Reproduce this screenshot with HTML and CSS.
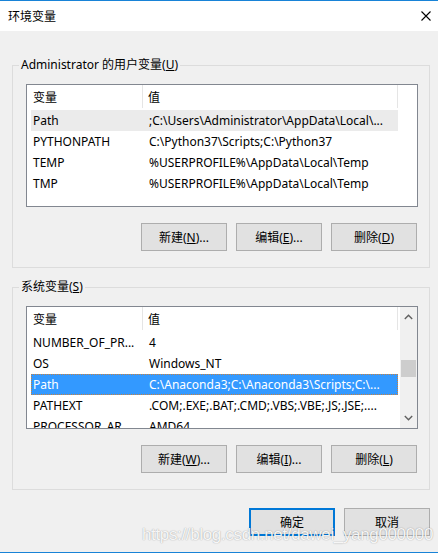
FILE: index.html
```html
<!DOCTYPE html>
<html lang="zh">
<head>
<meta charset="utf-8">
<title>环境变量</title>
<link rel="stylesheet" href="styles.css">
</head>
<body>
<div class="window">
  <div class="titlebar">
    <span class="title">环境变量</span>
    <svg class="close" width="10" height="10" viewBox="0 0 10 10"><path d="M0.5 0.5 L9.5 9.5 M9.5 0.5 L0.5 9.5" stroke="#000" stroke-width="1.1" fill="none"/></svg>
  </div>
  <div class="content">
    <fieldset class="group group-user">
      <legend>Administrator 的用户变量(<u>U</u>)</legend>
      <div class="list">
        <div class="list-main">
          <div class="header">
            <div class="hcell c1">变量</div>
            <div class="hcell c2">值</div>
          </div>
          <div class="row hover"><span class="cell c1">Path</span><span class="cell c2">;C:\Users\Administrator\AppData\Local\...</span></div>
          <div class="row"><span class="cell c1">PYTHONPATH</span><span class="cell c2">C:\Python37\Scripts;C:\Python37</span></div>
          <div class="row"><span class="cell c1">TEMP</span><span class="cell c2">%USERPROFILE%\AppData\Local\Temp</span></div>
          <div class="row"><span class="cell c1">TMP</span><span class="cell c2">%USERPROFILE%\AppData\Local\Temp</span></div>
        </div>
      </div>
      <div class="buttons">
        <button class="btn">新建(<u>N</u>)...</button>
        <button class="btn">编辑(<u>E</u>)...</button>
        <button class="btn">删除(<u>D</u>)</button>
      </div>
    </fieldset>
    <fieldset class="group group-sys">
      <legend>系统变量(<u>S</u>)</legend>
      <div class="list">
        <div class="list-main">
          <div class="header">
            <div class="hcell c1">变量</div>
            <div class="hcell c2">值</div>
          </div>
          <div class="row"><span class="cell c1">NUMBER_OF_PR...</span><span class="cell c2">4</span></div>
          <div class="row"><span class="cell c1">OS</span><span class="cell c2">Windows_NT</span></div>
          <div class="row selected"><span class="cell c1">Path</span><span class="cell c2">C:\Anaconda3;C:\Anaconda3\Scripts;C:\...</span></div>
          <div class="row"><span class="cell c1">PATHEXT</span><span class="cell c2">.COM;.EXE;.BAT;.CMD;.VBS;.VBE;.JS;.JSE;....</span></div>
          <div class="row"><span class="cell c1">PROCESSOR_AR...</span><span class="cell c2">AMD64</span></div>
        </div>
        <div class="scrollbar">
          <svg class="arrow" width="9" height="6" viewBox="0 0 9 6"><path d="M0.8 5 L4.5 1.3 L8.2 5" stroke="#606060" stroke-width="1.4" fill="none"/></svg>
          <div class="track"><div class="thumb"></div></div>
          <svg class="arrow" width="9" height="6" viewBox="0 0 9 6"><path d="M0.8 1 L4.5 4.7 L8.2 1" stroke="#606060" stroke-width="1.4" fill="none"/></svg>
        </div>
      </div>
      <div class="buttons">
        <button class="btn">新建(<u>W</u>)...</button>
        <button class="btn">编辑(<u>I</u>)...</button>
        <button class="btn">删除(<u>L</u>)</button>
      </div>
    </fieldset>
    <div class="dialog-buttons">
      <button class="btn default">确定</button>
      <button class="btn">取消</button>
    </div>
    <div class="watermark">https://blog.csdn.net/dawei_yang000000</div>
  </div>
</div>
</body>
</html>
```

FILE: styles.css
```css
* { box-sizing: border-box; }
html, body {
  margin: 0;
  padding: 0;
  background: #f0f0f0;
}
body {
  font-family: "Noto Sans", "Noto Sans CJK SC", sans-serif;
  font-size: 12px;
  color: #000;
}
.window {
  width: 438px;
  height: 553px;
  display: flex;
  flex-direction: column;
  border-top: 1px solid #1883d7;
  border-bottom: 1px solid #1883d7;
  background: #f0f0f0;
  position: relative;
  overflow: hidden;
}
.titlebar {
  height: 30px;
  background: #fff;
  display: flex;
  align-items: center;
  justify-content: space-between;
  padding: 0 7px 0 8px;
  flex: none;
}
.title {
  font-size: 12px;
  line-height: 16px;
  margin-top: 1px;
}
.close { display: block; }
.content {
  flex: 1;
  padding: 0 8px 0 12px;
  display: flex;
  flex-direction: column;
}
.group {
  margin: 0;
  border: 1px solid #dcdcdc;
  padding: 12px 11px 16px 13px;
  min-width: 0;
}
.group-user { margin-top: 27px; }
.group-sys { margin-top: 12px; }
.group legend {
  padding: 0 2px;
  margin-left: -7px;
  line-height: 14px;
  font-size: 12px;
}
.list {
  height: 123px;
  border: 1px solid #828790;
  background: #fff;
  display: flex;
  overflow: hidden;
}
.list-main {
  flex: 1;
  min-width: 0;
  overflow: hidden;
}
.header {
  height: 25px;
  display: flex;
  width: 371px;
}
.hcell {
  display: flex;
  align-items: center;
  white-space: nowrap;
  border-right: 1px solid #e5e5e5;
  height: 23px;
}
.hcell.c1 { width: 116px; padding-left: 6px; }
.hcell.c2 { width: 255px; padding-left: 5px; }
.row {
  height: 21px;
  margin-left: 4px;
  width: 367px;
  display: flex;
  align-items: center;
  white-space: nowrap;
  border: 1px solid transparent;
}
.row.hover { background: #ebebeb; border-color: #ebebeb; }
.row.selected {
  background: #3399ff;
  color: #fff;
  border: 1px dotted #c8813f;
}
.cell { overflow: hidden; white-space: nowrap; }
.cell.c1 { width: 111px; padding-left: 1px; flex: none; }
.cell.c2 { flex: 1; padding-left: 6px; }
.scrollbar {
  width: 17px;
  flex: none;
  background: #f0f0f0;
  display: flex;
  flex-direction: column;
  align-items: center;
}
.scrollbar .arrow { display: block; margin: 7px 0; }
.track {
  flex: 1;
  width: 100%;
  display: flex;
  flex-direction: column;
  padding-top: 33px;
}
.thumb {
  height: 17px;
  background: #cdcdcd;
  margin: 0 1px;
}
.buttons {
  display: flex;
  justify-content: flex-end;
  gap: 9px;
  margin-top: 16px;
  padding-right: 1px;
}
.btn {
  width: 86px;
  height: 28px;
  background: #e1e1e1;
  border: 1px solid #adadad;
  font-family: inherit;
  font-size: 12px;
  color: #000;
  padding: 0;
  margin: 0;
}
.btn.default {
  border: 2px solid #0078d7;
}
.dialog-buttons {
  display: flex;
  justify-content: flex-end;
  gap: 9px;
  margin-top: 18px;
}
.watermark {
  position: absolute;
  left: 142px;
  top: 524px;
  font-family: "Liberation Sans", Arial, sans-serif;
  font-size: 17px;
  line-height: 20px;
  color: rgba(255, 255, 255, 0.92);
  text-shadow: 0 0 1px rgba(0, 0, 0, 0.3), 0 0 2px rgba(0, 0, 0, 0.12);
  white-space: nowrap;
  letter-spacing: -0.35px;
}
```
